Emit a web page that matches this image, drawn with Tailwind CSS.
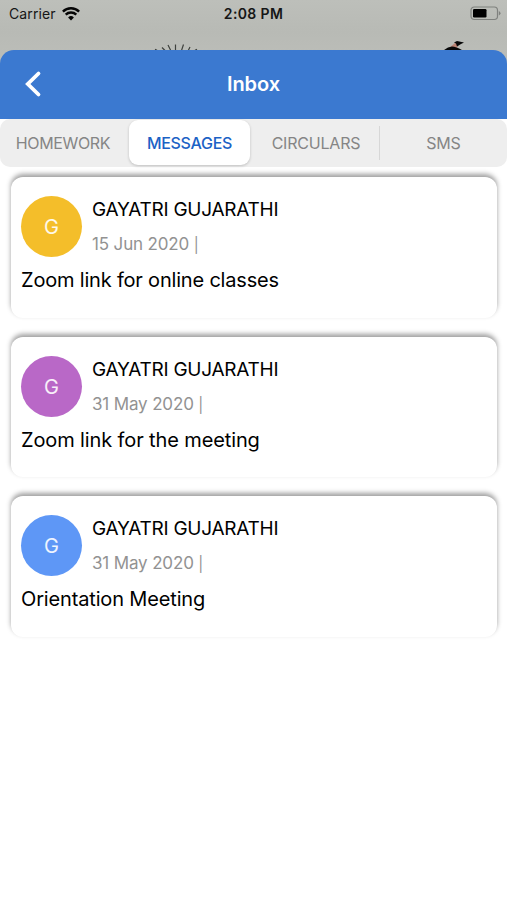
<!DOCTYPE html>
<html lang="en">
<head>
<meta charset="utf-8">
<title>Inbox</title>
<script src="https://cdn.jsdelivr.net/npm/@tailwindcss/browser@4"></script>
</head>
<body class="bg-white">
<div class="relative flex h-[900px] w-[507px] flex-col overflow-hidden bg-white font-['Inter','Liberation_Sans',sans-serif]">
  <div class="h-[70px] shrink-0 bg-linear-to-b from-[#bdbfba] via-[#b8bab5] via-45% to-[#bdbfba]">
    <div class="grid h-[27px] grid-cols-3 items-center pr-[6px] pl-[9px] text-[14px] text-[#161616]">
      <div class="flex items-center gap-[6px]">
        <span class="tracking-[0.1px]">Carrier</span>
        <svg class="h-[14px] w-[18px]" viewBox="0 0 18 14" fill="none" stroke="#050505" stroke-width="2.4"><path d="M.9 4.600a11.600 11.600 0 0 1 16.200 0M3.700 7.600a7.600 7.600 0 0 1 10.600 0"/><path d="M9 13.400 6.100 10.500a4.200 4.200 0 0 1 5.800 0z" fill="#050505" stroke="none"/></svg>
      </div>
      <span class="-ml-[3px] text-center font-semibold tracking-[0.350px] whitespace-nowrap">2:08 PM</span>
      <svg class="h-[15px] w-[31px] justify-self-end" viewBox="0 0 31 15"><rect x="1" y="1" width="26.5" height="12.5" rx="3.2" fill="none" stroke="#7f817e" stroke-width="1.2"/><rect x="3" y="3" width="13.5" height="8.5" rx="1.2" fill="#000"/><path d="M28.8 5v4.6q1.7-.9 1.7-2.3t-1.7-2.3z" fill="#7f817e"/></svg>
    </div>
    <svg class="mt-px h-7 w-[507px]" viewBox="0 0 507 28"><path d="M155 21.4l2 1M162 19.5l3 3M168 17l3 6M175.500 16.500v6M183.500 16.500l-2 6M190 19l-2 4M197 21.400l-2 1" stroke="#3f423e" stroke-width="1.2"/><path d="M449 20l6-5 3 0-1 6z" fill="#bd8475"/><path d="M444 22q4-3.500 8-3.500t10 3.500zM454 14.500l3-1.500 7 1.500-3 1.500-4 2.500-1-3z" fill="#080808"/></svg>
  </div>
  <header class="relative z-10 -mt-5 grid h-[68.500px] shrink-0 grid-cols-3 items-center rounded-t-[14px] bg-[#3b79d0] text-white">
    <svg class="ml-6 h-[28px] w-[18px]" viewBox="0 0 18 28" fill="none" stroke="#fff" stroke-width="3.800" stroke-linecap="round" stroke-linejoin="miter"><path d="M14.500 3.500 3.800 14l10.700 10.500"/></svg>
    <h1 class="text-center text-[20px] font-semibold tracking-[-0.1px]">Inbox</h1>
  </header>
  <nav class="flex h-[48.500px] shrink-0 items-center rounded-[10px] bg-[#eeeeee] text-[16px] text-[#858585]">
    <span class="w-[126px] text-center tracking-[-0.35px]">HOMEWORK</span>
    <span class="ml-[3px] flex h-[45px] w-[121px] items-center justify-center rounded-[9px] bg-white font-medium tracking-[-0.3px] text-[#1b62c5] shadow-[0_1px_3px_rgba(0,0,0,0.2)]">MESSAGES</span>
    <span class="flex h-[34px] w-[130px] items-center justify-center border-r border-[#d7d7d7] pl-[3px] tracking-[-0.2px]">CIRCULARS</span>
    <span class="flex-1 text-center tracking-[-0.2px]">SMS</span>
  </nav>
  <main class="flex flex-col gap-[19px] pt-[10px] pr-[10px] pl-[11px] text-black">
    <article class="h-[140.500px] rounded-[12px] bg-white px-[10px] pt-[19px] shadow-[0_-3px_5px_rgba(0,0,0,0.38)]">
      <div class="flex gap-[10px]"><div class="flex size-[61px] items-center justify-center rounded-full bg-[#f4be2a] pt-px text-[20px] text-white/90">G</div>
        <div><h2 class="h-[36px] pt-[2px] text-[19px] leading-6 tracking-[-0.25px]">GAYATRI GUJARATHI</h2><p class="text-[17px] leading-[25px] tracking-[-0.150px] text-[#929292]">15 Jun 2020 <span class="text-[15px]">|</span></p></div></div>
      <p class="mt-[11px] text-[20px] leading-[25px] tracking-[-0.190px]">Zoom link for online classes</p>
    </article>
    <article class="h-[140.500px] rounded-[12px] bg-white px-[10px] pt-[19px] shadow-[0_-3px_5px_rgba(0,0,0,0.38)]">
      <div class="flex gap-[10px]"><div class="flex size-[61px] items-center justify-center rounded-full bg-[#b968c7] pt-px text-[20px] text-white/90">G</div>
        <div><h2 class="h-[36px] pt-[2px] text-[19px] leading-6 tracking-[-0.25px]">GAYATRI GUJARATHI</h2><p class="text-[17px] leading-[25px] tracking-[-0.150px] text-[#929292]">31 May 2020 <span class="text-[15px]">|</span></p></div></div>
      <p class="mt-[11px] text-[20px] leading-[25px] tracking-[-0.120px]">Zoom link for the meeting</p>
    </article>
    <article class="h-[140.500px] rounded-[12px] bg-white px-[10px] pt-[19px] shadow-[0_-3px_5px_rgba(0,0,0,0.38)]">
      <div class="flex gap-[10px]"><div class="flex size-[61px] items-center justify-center rounded-full bg-[#5e97f6] pt-px text-[20px] text-white/90">G</div>
        <div><h2 class="h-[36px] pt-[2px] text-[19px] leading-6 tracking-[-0.25px]">GAYATRI GUJARATHI</h2><p class="text-[17px] leading-[25px] tracking-[-0.150px] text-[#929292]">31 May 2020 <span class="text-[15px]">|</span></p></div></div>
      <p class="mt-[11px] text-[20px] leading-[25px] tracking-[-0.150px]">Orientation Meeting</p>
    </article>
  </main>
</div>
</body>
</html>
